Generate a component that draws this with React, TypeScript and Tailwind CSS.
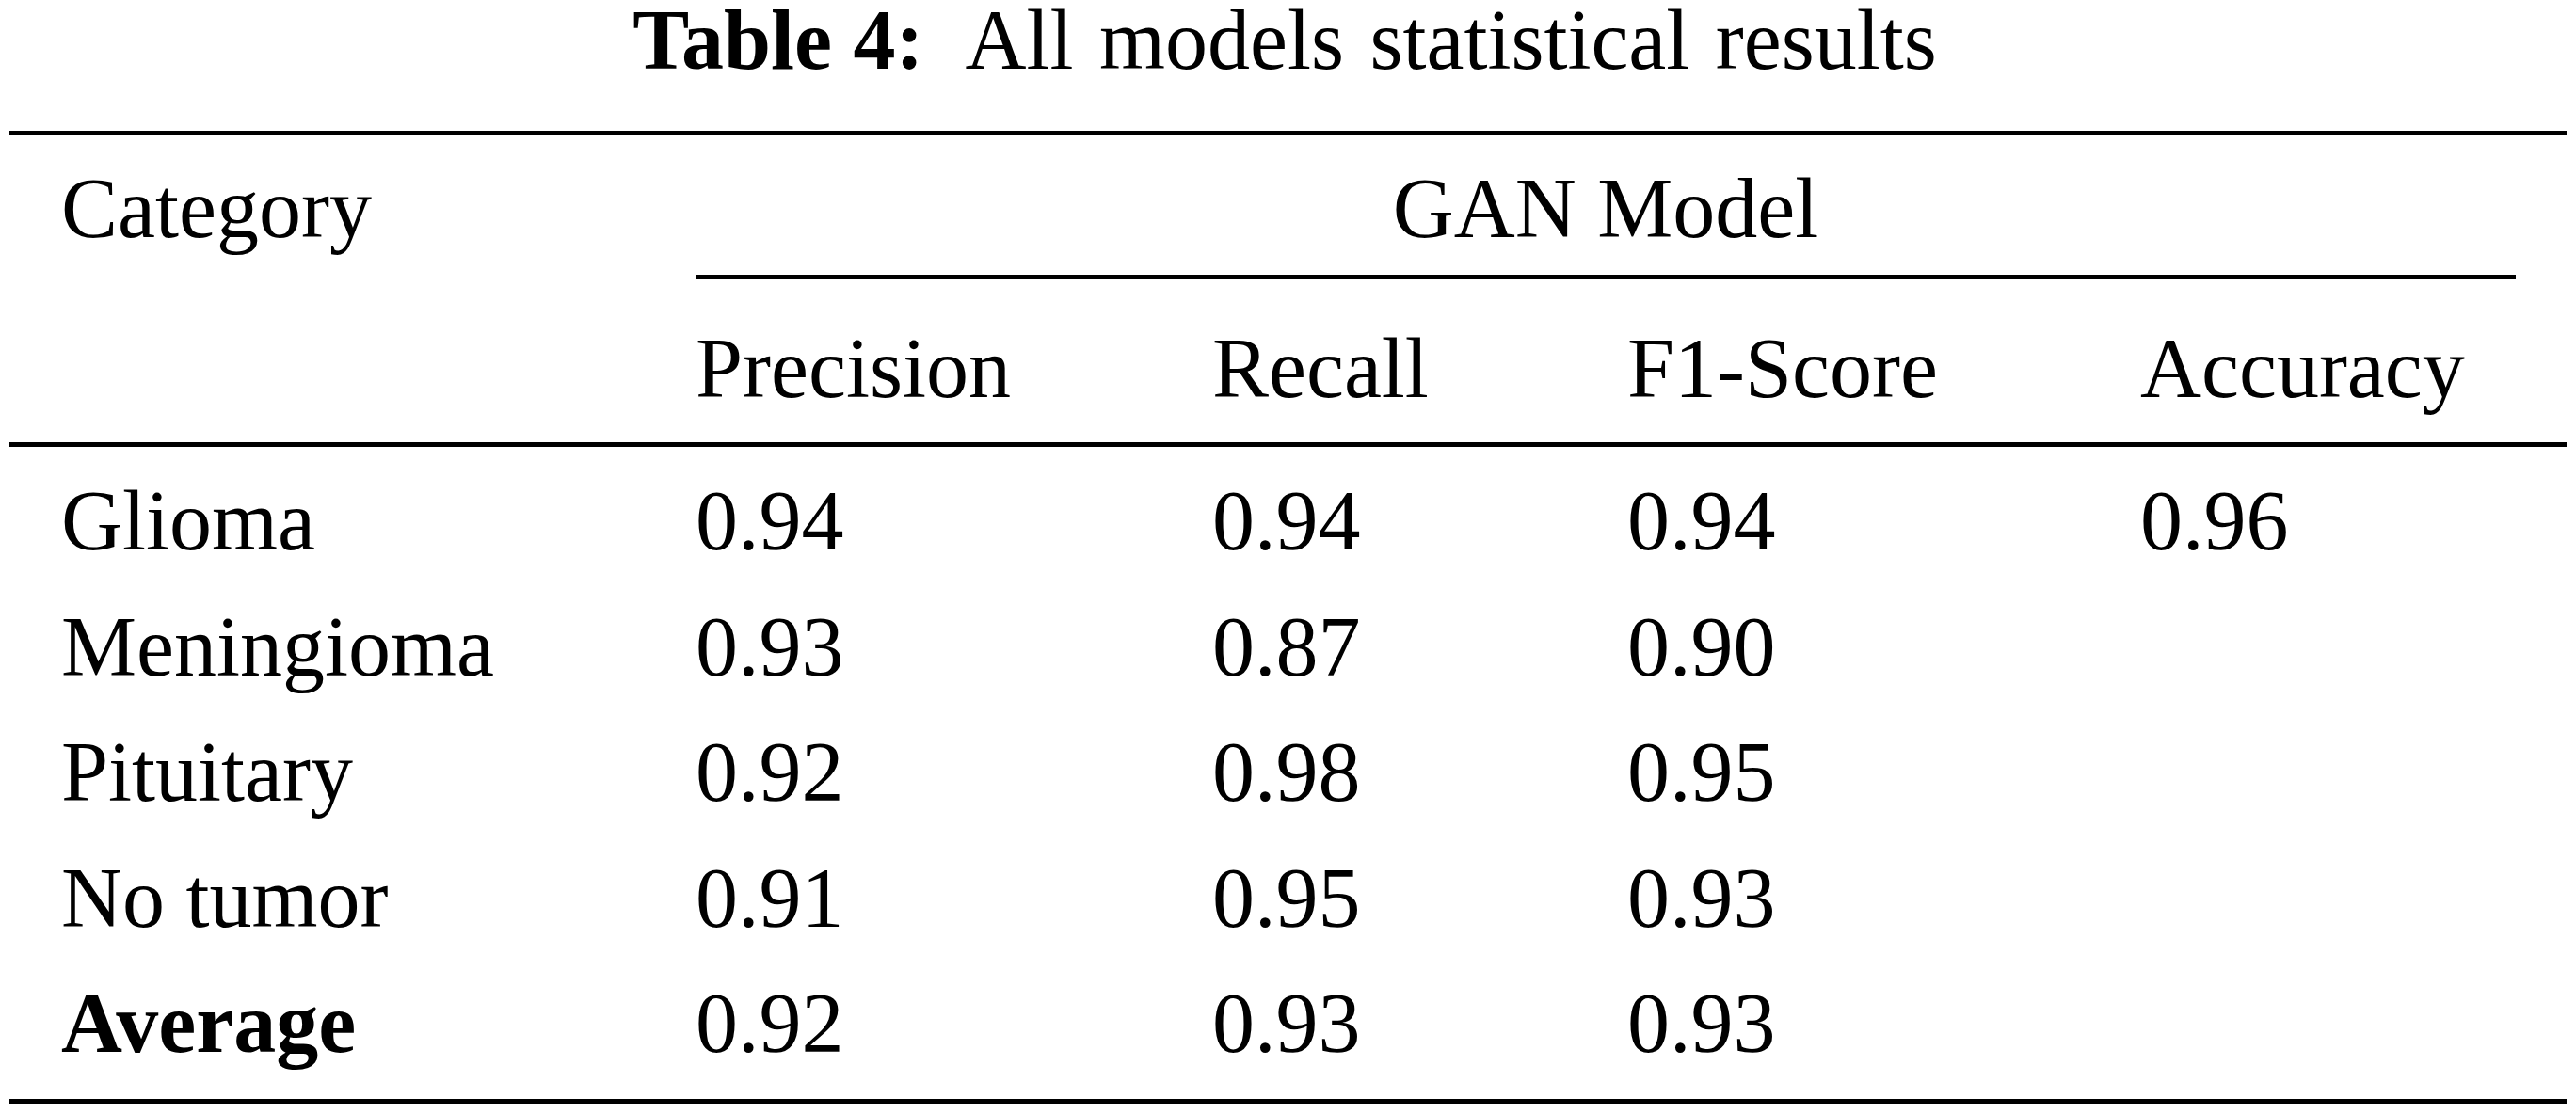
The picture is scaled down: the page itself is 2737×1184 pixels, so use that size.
const rows = [
  { name: "Glioma", p: "0.94", r: "0.94", f: "0.94", a: "0.96" },
  { name: "Meningioma", p: "0.93", r: "0.87", f: "0.90", a: "" },
  { name: "Pituitary", p: "0.92", r: "0.98", f: "0.95", a: "" },
  { name: "No tumor", p: "0.91", r: "0.95", f: "0.93", a: "" },
  { name: "Average", p: "0.92", r: "0.93", f: "0.93", a: "", bold: true },
];

const cols = "grid grid-cols-[729px_549px_441px_545px_1fr]";

export default function App() {
  return (
    <div className="w-[2737px] h-[1184px] bg-white text-black font-['Liberation_Serif','Times_New_Roman',serif] text-[90px]">
      {/* caption */}
      <div className="h-[139px] flex justify-center pr-[7px] leading-[86px] whitespace-nowrap">
        <span className="font-bold">Table 4:</span>
        <span className="ml-[44px] [word-spacing:5px]">All models statistical results</span>
      </div>

      <div className="ml-[10px] w-[2717px]">
        <div className="h-[5px] bg-black" />

        {/* header */}
        <div className={`${cols} grid-rows-[148px_5px_173px] leading-[100px]`}>
          <div className="pt-[28px] pl-[55px]">Category</div>
          <div className="col-span-4 pt-[28px] pr-[54px] text-center">GAN Model</div>
          <div />
          <div className="col-span-4 mr-[54px] bg-black" />
          <div />
          <div className="pt-[45px]">Precision</div>
          <div className="pt-[45px]">Recall</div>
          <div className="pt-[45px]">F1-Score</div>
          <div className="pt-[45px]">Accuracy</div>
        </div>

        <div className="h-[5px] bg-black" />

        {/* body */}
        <div className="pt-[12px] pb-[13.5px]">
          {rows.map((row) => (
            <div key={row.name} className={`${cols} h-[133.5px] leading-[133.5px]`}>
              <div className={row.bold ? "pl-[55px] font-bold" : "pl-[55px]"}>{row.name}</div>
              <div>{row.p}</div>
              <div>{row.r}</div>
              <div>{row.f}</div>
              <div>{row.a}</div>
            </div>
          ))}
        </div>

        <div className="h-[5px] bg-black" />
      </div>
    </div>
  );
}
